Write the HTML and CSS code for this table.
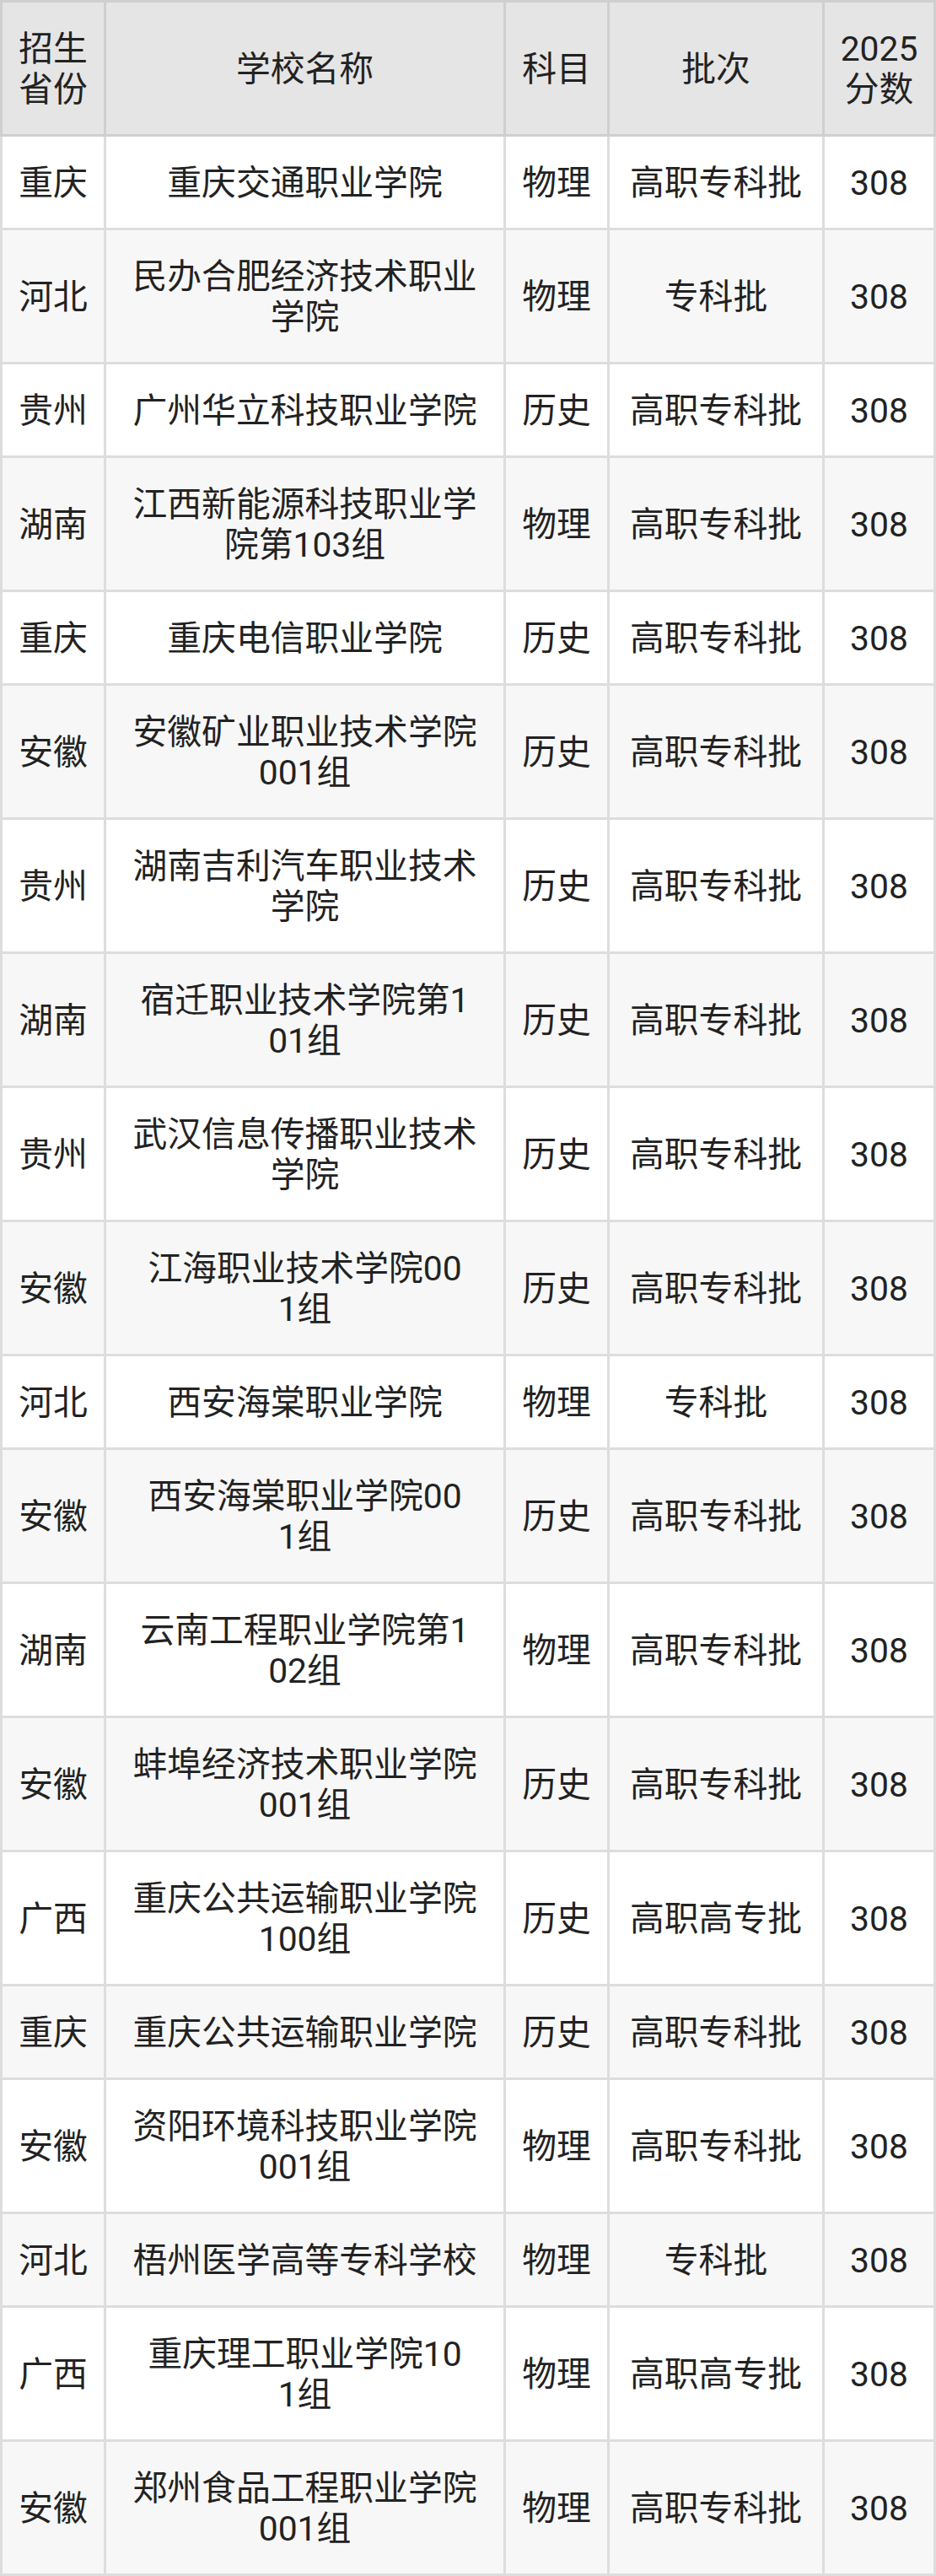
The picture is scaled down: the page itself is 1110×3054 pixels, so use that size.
FILE: index.html
```html
<!DOCTYPE html>
<html lang="zh-CN">
<head>
<meta charset="utf-8">
<title>2025 分数</title>
<link rel="stylesheet" href="styles.css">
</head>
<body>
<div class="table">
  <div class="row head">
    <div class="cell">招生<br>省份</div>
    <div class="cell">学校名称</div>
    <div class="cell">科目</div>
    <div class="cell">批次</div>
    <div class="cell">2025<br>分数</div>
  </div>
  <div class="row">
    <div class="cell">重庆</div><div class="cell">重庆交通职业学院</div><div class="cell">物理</div><div class="cell">高职专科批</div><div class="cell">308</div>
  </div>
  <div class="row alt">
    <div class="cell">河北</div><div class="cell">民办合肥经济技术职业<br>学院</div><div class="cell">物理</div><div class="cell">专科批</div><div class="cell">308</div>
  </div>
  <div class="row">
    <div class="cell">贵州</div><div class="cell">广州华立科技职业学院</div><div class="cell">历史</div><div class="cell">高职专科批</div><div class="cell">308</div>
  </div>
  <div class="row alt">
    <div class="cell">湖南</div><div class="cell">江西新能源科技职业学<br>院第103组</div><div class="cell">物理</div><div class="cell">高职专科批</div><div class="cell">308</div>
  </div>
  <div class="row">
    <div class="cell">重庆</div><div class="cell">重庆电信职业学院</div><div class="cell">历史</div><div class="cell">高职专科批</div><div class="cell">308</div>
  </div>
  <div class="row alt">
    <div class="cell">安徽</div><div class="cell">安徽矿业职业技术学院<br>001组</div><div class="cell">历史</div><div class="cell">高职专科批</div><div class="cell">308</div>
  </div>
  <div class="row">
    <div class="cell">贵州</div><div class="cell">湖南吉利汽车职业技术<br>学院</div><div class="cell">历史</div><div class="cell">高职专科批</div><div class="cell">308</div>
  </div>
  <div class="row alt">
    <div class="cell">湖南</div><div class="cell">宿迁职业技术学院第1<br>01组</div><div class="cell">历史</div><div class="cell">高职专科批</div><div class="cell">308</div>
  </div>
  <div class="row">
    <div class="cell">贵州</div><div class="cell">武汉信息传播职业技术<br>学院</div><div class="cell">历史</div><div class="cell">高职专科批</div><div class="cell">308</div>
  </div>
  <div class="row alt">
    <div class="cell">安徽</div><div class="cell">江海职业技术学院00<br>1组</div><div class="cell">历史</div><div class="cell">高职专科批</div><div class="cell">308</div>
  </div>
  <div class="row">
    <div class="cell">河北</div><div class="cell">西安海棠职业学院</div><div class="cell">物理</div><div class="cell">专科批</div><div class="cell">308</div>
  </div>
  <div class="row alt">
    <div class="cell">安徽</div><div class="cell">西安海棠职业学院00<br>1组</div><div class="cell">历史</div><div class="cell">高职专科批</div><div class="cell">308</div>
  </div>
  <div class="row">
    <div class="cell">湖南</div><div class="cell">云南工程职业学院第1<br>02组</div><div class="cell">物理</div><div class="cell">高职专科批</div><div class="cell">308</div>
  </div>
  <div class="row alt">
    <div class="cell">安徽</div><div class="cell">蚌埠经济技术职业学院<br>001组</div><div class="cell">历史</div><div class="cell">高职专科批</div><div class="cell">308</div>
  </div>
  <div class="row">
    <div class="cell">广西</div><div class="cell">重庆公共运输职业学院<br>100组</div><div class="cell">历史</div><div class="cell">高职高专批</div><div class="cell">308</div>
  </div>
  <div class="row alt">
    <div class="cell">重庆</div><div class="cell">重庆公共运输职业学院</div><div class="cell">历史</div><div class="cell">高职专科批</div><div class="cell">308</div>
  </div>
  <div class="row">
    <div class="cell">安徽</div><div class="cell">资阳环境科技职业学院<br>001组</div><div class="cell">物理</div><div class="cell">高职专科批</div><div class="cell">308</div>
  </div>
  <div class="row alt">
    <div class="cell">河北</div><div class="cell">梧州医学高等专科学校</div><div class="cell">物理</div><div class="cell">专科批</div><div class="cell">308</div>
  </div>
  <div class="row">
    <div class="cell">广西</div><div class="cell">重庆理工职业学院10<br>1组</div><div class="cell">物理</div><div class="cell">高职高专批</div><div class="cell">308</div>
  </div>
  <div class="row alt">
    <div class="cell">安徽</div><div class="cell">郑州食品工程职业学院<br>001组</div><div class="cell">物理</div><div class="cell">高职专科批</div><div class="cell">308</div>
  </div>
</div>
</body>
</html>
```
FILE: styles.css
```css
html, body {
  margin: 0;
  padding: 0;
  background: #ffffff;
}

.table {
  width: 1110px;
  font-family: Roboto, "Noto Sans CJK SC", sans-serif;
  font-size: 40.8px;
  line-height: 48px;
  color: #222222;
}

.row {
  display: grid;
  grid-template-columns: 120px 471px 120px 252px 129px;
  column-gap: 3px;
  padding: 0 3px 3px;
  background: #dddddd;
}

.row.head {
  padding: 3px;
  background: #cfcfcf;
}

.cell {
  display: flex;
  align-items: center;
  justify-content: center;
  text-align: center;
  padding: 31px 0 29px;
  background: #ffffff;
}

.head .cell {
  background: #e5e5e5;
}

.row.alt .cell {
  background: #f7f7f7;
}
```
